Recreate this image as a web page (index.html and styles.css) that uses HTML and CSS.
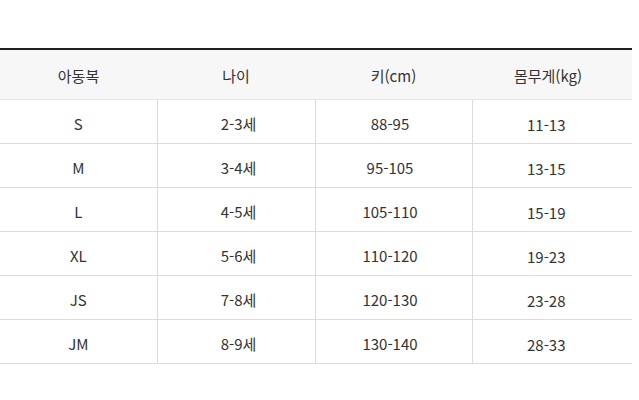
FILE: index.html
```html
<!DOCTYPE html>
<html lang="ko">
<head>
<meta charset="utf-8">
<link rel="stylesheet" href="styles.css">
</head>
<body>
<table class="size-table">
  <colgroup>
    <col class="col1">
    <col class="col2">
    <col class="col3">
    <col class="col4">
  </colgroup>
  <thead>
    <tr>
      <th>아동복</th>
      <th>나이</th>
      <th>키(cm)</th>
      <th class="c4">몸무게(kg)</th>
    </tr>
  </thead>
  <tbody>
    <tr><td>S</td><td class="c2">2-3세</td><td class="c3">88-95</td><td class="c4">11-13</td></tr>
    <tr><td>M</td><td class="c2">3-4세</td><td class="c3">95-105</td><td class="c4">13-15</td></tr>
    <tr><td>L</td><td class="c2">4-5세</td><td class="c3">105-110</td><td class="c4">15-19</td></tr>
    <tr><td>XL</td><td class="c2">5-6세</td><td class="c3">110-120</td><td class="c4">19-23</td></tr>
    <tr><td>JS</td><td class="c2">7-8세</td><td class="c3">120-130</td><td class="c4">23-28</td></tr>
    <tr><td>JM</td><td class="c2">8-9세</td><td class="c3">130-140</td><td class="c4">28-33</td></tr>
  </tbody>
</table>
</body>
</html>
```
FILE: styles.css
```css
html, body {
  margin: 0;
  padding: 0;
  background: #ffffff;
}
body {
  padding-top: 48px;
  font-family: "Noto Sans CJK KR", "Noto Sans", sans-serif;
  color: #333333;
}
.size-table {
  width: 632px;
  border-collapse: collapse;
  table-layout: fixed;
  border-top: 2px solid #1e1e1e;
}
.size-table .col1 { width: 157px; }
.size-table .col2 { width: 158px; }
.size-table .col3 { width: 157px; }
.size-table .col4 { width: 160px; }
.size-table th,
.size-table td {
  box-sizing: border-box;
  padding: 0;
  text-align: center;
  font-size: 15px;
  font-weight: 400;
  line-height: 20px;
}
.size-table th {
  height: 50px;
  background: #f7f7f7;
  border-bottom: 1px solid #e6e6e6;
  padding-top: 4px;
  color: #333333;
}
.size-table th.c4 {
  padding-right: 8px;
}
.size-table td {
  height: 44px;
  border-bottom: 1px solid #dcdcdc;
  border-left: 1px solid #dcdcdc;
  padding-top: 5px;
}
.size-table td:first-child {
  border-left: none;
}
.size-table td.c2 {
  padding-left: 5px;
}
.size-table td.c3 {
  padding-right: 7px;
}
.size-table td.c4 {
  padding-top: 8px;
  padding-right: 12px;
}
```
